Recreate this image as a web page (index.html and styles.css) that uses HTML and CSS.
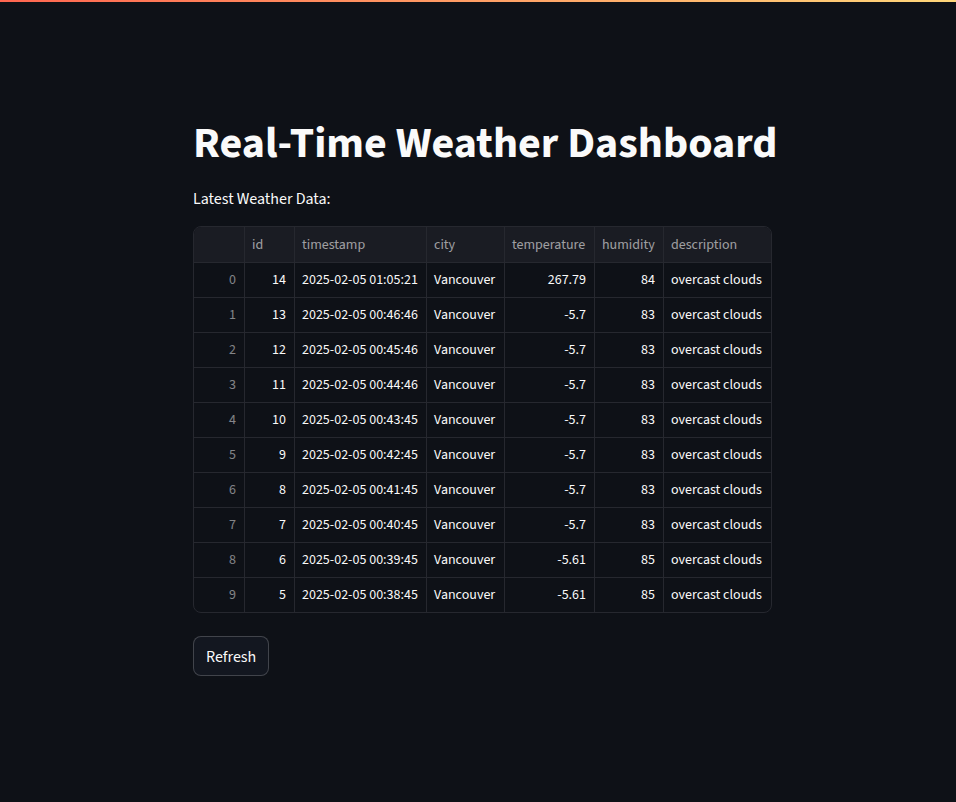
FILE: index.html
```html
<!DOCTYPE html>
<html lang="en">
<head>
<meta charset="utf-8">
<title>Real-Time Weather Dashboard</title>
<link rel="stylesheet" href="styles.css">
</head>
<body>
<div class="decoration"></div>
<main class="container">
  <h1 class="title">Real-Time Weather Dashboard</h1>
  <p class="caption">Latest Weather Data:</p>
  <div class="frame">
    <table class="grid">
      <thead>
        <tr><th class="idx-head"></th><th>id</th><th>timestamp</th><th>city</th><th>temperature</th><th>humidity</th><th class="last">description</th></tr>
      </thead>
      <tbody>
        <tr><td class="idx">0</td><td class="num">14</td><td>2025-02-05 01:05:21</td><td>Vancouver</td><td class="num">267.79</td><td class="num">84</td><td class="last">overcast clouds</td></tr>
        <tr><td class="idx">1</td><td class="num">13</td><td>2025-02-05 00:46:46</td><td>Vancouver</td><td class="num">-5.7</td><td class="num">83</td><td class="last">overcast clouds</td></tr>
        <tr><td class="idx">2</td><td class="num">12</td><td>2025-02-05 00:45:46</td><td>Vancouver</td><td class="num">-5.7</td><td class="num">83</td><td class="last">overcast clouds</td></tr>
        <tr><td class="idx">3</td><td class="num">11</td><td>2025-02-05 00:44:46</td><td>Vancouver</td><td class="num">-5.7</td><td class="num">83</td><td class="last">overcast clouds</td></tr>
        <tr><td class="idx">4</td><td class="num">10</td><td>2025-02-05 00:43:45</td><td>Vancouver</td><td class="num">-5.7</td><td class="num">83</td><td class="last">overcast clouds</td></tr>
        <tr><td class="idx">5</td><td class="num">9</td><td>2025-02-05 00:42:45</td><td>Vancouver</td><td class="num">-5.7</td><td class="num">83</td><td class="last">overcast clouds</td></tr>
        <tr><td class="idx">6</td><td class="num">8</td><td>2025-02-05 00:41:45</td><td>Vancouver</td><td class="num">-5.7</td><td class="num">83</td><td class="last">overcast clouds</td></tr>
        <tr><td class="idx">7</td><td class="num">7</td><td>2025-02-05 00:40:45</td><td>Vancouver</td><td class="num">-5.7</td><td class="num">83</td><td class="last">overcast clouds</td></tr>
        <tr><td class="idx">8</td><td class="num">6</td><td>2025-02-05 00:39:45</td><td>Vancouver</td><td class="num">-5.61</td><td class="num">85</td><td class="last">overcast clouds</td></tr>
        <tr class="final"><td class="idx">9</td><td class="num">5</td><td>2025-02-05 00:38:45</td><td>Vancouver</td><td class="num">-5.61</td><td class="num">85</td><td class="last">overcast clouds</td></tr>
      </tbody>
    </table>
  </div>
  <button class="btn" type="button">Refresh</button>
</main>
</body>
</html>
```
FILE: styles.css
```css
* { box-sizing: border-box; }
html, body {
  margin: 0;
  padding: 0;
  background: #0e1117;
  color: #fafafa;
  font-family: "Source Sans 3", "Roboto Condensed", "Liberation Sans", sans-serif;
}
.decoration {
  height: 2px;
  background: linear-gradient(90deg, #ff6650, #ffd77a);
}
.container {
  width: 570px;
  margin: 0 auto;
  padding: 96px 0 120px;
  display: flex;
  flex-direction: column;
  align-items: flex-start;
}
.title {
  margin: 0;
  padding: 20px 0 16px;
  font-size: 44px;
  font-weight: 700;
  line-height: 1.2;
  white-space: nowrap;
}
.caption {
  margin: 0;
  font-size: 16px;
  line-height: 25.6px;
}
.frame {
  margin-top: 14px;
  border: 1px solid #26282f;
  border-radius: 8px;
  overflow: hidden;
  width: 579px;
}
.grid {
  display: grid;
  grid-template-columns: 51px 50px 132px 78px 90px 69px 107px;
  border-spacing: 0;
  font-size: 14px;
}
.grid thead, .grid tbody, .grid tr { display: contents; }
.grid th, .grid td {
  display: flex;
  align-items: center;
  padding: 0 8px 0 7px;
  border-right: 1px solid #26282f;
  border-bottom: 1px solid #26282f;
  white-space: nowrap;
  overflow: hidden;
}
.grid th.last, .grid td.last { border-right: 0; }
.grid tr.final td { border-bottom: 0; height: 34px; }
.grid th {
  height: 36px;
  background: #1a1c23;
  color: rgba(250, 250, 250, 0.6);
  font-weight: 400;
}
.grid td {
  height: 35px;
  color: #fafafa;
}
.grid td.num, .grid td.idx { justify-content: flex-end; }
.grid td.idx { color: rgba(250, 250, 250, 0.5); }
.btn {
  margin-top: 23px;
  height: 40px;
  padding: 0 12px;
  background: #131720;
  color: #fafafa;
  border: 1px solid rgba(250, 250, 250, 0.2);
  border-radius: 8px;
  font-family: inherit;
  font-size: 16px;
  line-height: 1;
  padding-top: 1px;
}
```
